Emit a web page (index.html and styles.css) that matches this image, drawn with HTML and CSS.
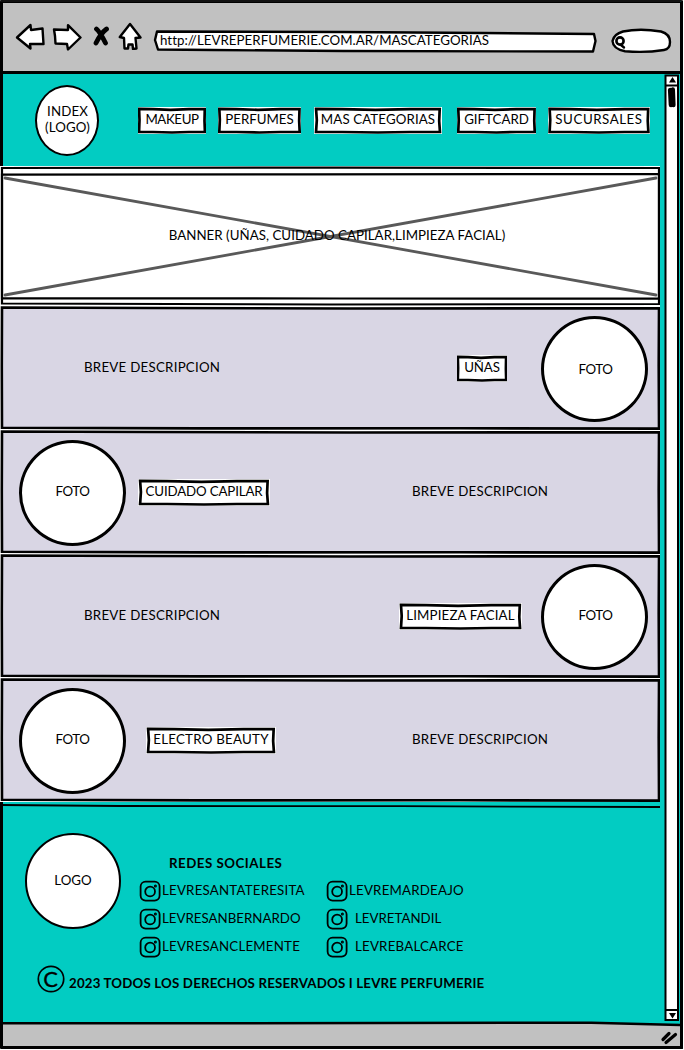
FILE: index.html
```
<!DOCTYPE html>
<html lang="es">
<head>
<meta charset="utf-8">
<title>Levre Perfumerie - Mas categorias</title>
<link rel="stylesheet" href="styles.css">
</head>
<body>
<svg class="defs" aria-hidden="true">
  <symbol id="chip" viewBox="0 0 100 27" preserveAspectRatio="none">
    <rect width="100" height="27" fill="#fff"/>
    <path d="M1.6 1.8 L22 2.2 48 2.8 75 2.2 98.2 2 97.8 14 98.4 25 75 25 50 25.5 22 25 1.6 24.8 2.2 13Z"/>
  </symbol>
  <symbol id="panel" viewBox="0 0 660 124" preserveAspectRatio="none">
    <rect width="660" height="124" fill="#fff"/>
    <path d="M2 1.5 L150 2 350 2.5 659 2.2 658.7 60 659 122.6 460 122.3 200 122.4 2 121.7 1.8 60Z"/>
  </symbol>
  <symbol id="instagram" viewBox="0 0 22 22">
    <rect x="1.6" y="1.6" width="19" height="19" rx="5"/>
    <circle cx="11.1" cy="11.5" r="4.9"/>
    <circle cx="16.4" cy="6" r=".6"/>
  </symbol>
</svg>
<div class="window">
  <header class="toolbar">
    <svg class="back" width="30" height="28" viewBox="0 0 30 28"><path d="M2 14.5 L15.5 2 16 7 27.5 5.5 28.5 21 15 21 15.5 25.5Z"/></svg>
    <svg class="forward" width="32" height="28" viewBox="0 0 32 28"><path d="M3 6.5 L17 7 17 2.2 29.5 14.5 17 26.5 16 21 4.5 20.5 4 13Z"/></svg>
    <svg class="stop" width="18" height="20" viewBox="0 0 18 20"><path d="M4.5 3 Q8 6 13.5 17 M14.5 3 Q9 7 4 17"/></svg>
    <svg class="home" width="24" height="28" viewBox="0 0 24 28"><path d="M12 2 L22.5 15.5 17.5 16 18.5 26.5 15 27 14.5 22.5 10.5 22.5 10 26.5 6.5 26.5 6 16 1.8 15Z"/></svg>
    <div class="address">
      <svg width="446" height="24" viewBox="0 0 446 24"><path d="M4 2.5 L190 3 330 4 441 5 442.5 12 440 22.5 190 22 60 21 5 20.5 2 11Z"/></svg>
      <span>http://LEVREPERFUMERIE.COM.AR/MASCATEGORIAS</span>
    </div>
    <svg class="search" width="62" height="28" viewBox="0 0 62 28"><path d="M13 4.5 Q30 1 51 4.5 Q60 7 60 15 Q60 22 54 23 Q35 26 15 24.2 Q3 22 2.5 14 Q4 7 13 4.5Z"/><circle cx="10" cy="14" r="3.6"/><path d="M11 18 L14 20.5"/></svg>
  </header>

  <div class="viewport">
    <main class="content">
      <nav class="nav">
        <a class="index">INDEX<br>(LOGO)</a>
        <div class="menu">
          <a class="chip makeup"><svg><use href="#chip"/></svg><span>MAKEUP</span></a>
          <a class="chip perfumes"><svg><use href="#chip"/></svg><span>PERFUMES</span></a>
          <a class="chip mas"><svg><use href="#chip"/></svg><span>MAS CATEGORIAS</span></a>
          <a class="chip gift"><svg><use href="#chip"/></svg><span>GIFTCARD</span></a>
          <a class="chip stores"><svg><use href="#chip"/></svg><span>SUCURSALES</span></a>
        </div>
      </nav>

      <section class="banner">
        <svg width="660" height="140" viewBox="0 0 660 140">
          <path class="outline" d="M2 2 L340 1.6 659 2 V138 L330 138.5 2 137.5Z"/>
          <path class="outline" d="M2 8.6 L300 8.3 659 8 V132.6 L340 132.5 2 132.3Z"/>
          <path class="cross" d="M5 12 L656 129 M5 129 L656 12"/>
        </svg>
        <span>BANNER (UÑAS, CUIDADO CAPILAR,LIMPIEZA FACIAL)</span>
      </section>

      <section class="row">
        <svg class="panel"><use href="#panel"/></svg>
        <div class="cells unas">
          <p>BREVE DESCRIPCION</p>
          <a class="chip"><svg><use href="#chip"/></svg><span>UÑAS</span></a>
          <div class="foto">FOTO</div>
        </div>
      </section>
      <section class="row">
        <svg class="panel"><use href="#panel"/></svg>
        <div class="cells capilar">
          <div class="foto">FOTO</div>
          <a class="chip"><svg><use href="#chip"/></svg><span>CUIDADO CAPILAR</span></a>
          <p>BREVE DESCRIPCION</p>
        </div>
      </section>
      <section class="row">
        <svg class="panel"><use href="#panel"/></svg>
        <div class="cells facial">
          <p>BREVE DESCRIPCION</p>
          <a class="chip"><svg><use href="#chip"/></svg><span>LIMPIEZA FACIAL</span></a>
          <div class="foto">FOTO</div>
        </div>
      </section>
      <section class="row">
        <svg class="panel"><use href="#panel"/></svg>
        <div class="cells electro">
          <div class="foto">FOTO</div>
          <a class="chip"><svg><use href="#chip"/></svg><span>ELECTRO BEAUTY</span></a>
          <p>BREVE DESCRIPCION</p>
        </div>
      </section>

      <footer class="footer">
        <svg class="rule" width="660" height="8" viewBox="0 0 660 8"><path d="M2 3 L120 4 400 4.2 660 5"/></svg>
        <div class="about">
          <div class="logo">LOGO</div>
          <div class="social">
            <h2>REDES SOCIALES</h2>
            <ul>
              <li><svg><use href="#instagram"/></svg><span>LEVRESANTATERESITA</span></li>
              <li><svg><use href="#instagram"/></svg><span>LEVREMARDEAJO</span></li>
              <li><svg><use href="#instagram"/></svg><span class="tight">LEVRESANBERNARDO</span></li>
              <li class="spaced"><svg><use href="#instagram"/></svg><span class="tight">LEVRETANDIL</span></li>
              <li><svg><use href="#instagram"/></svg><span>LEVRESANCLEMENTE</span></li>
              <li class="spaced"><svg><use href="#instagram"/></svg><span>LEVREBALCARCE</span></li>
            </ul>
          </div>
        </div>
        <div class="legal">
          <svg width="28" height="28" viewBox="0 0 28 28"><circle cx="14" cy="14" r="12.7"/><text x="13.5" y="21.8" text-anchor="middle">C</text></svg>
          <strong>2023 TODOS LOS DERECHOS RESERVADOS I LEVRE PERFUMERIE</strong>
        </div>
      </footer>
    </main>

    <aside class="scrollbar">
      <svg width="16" height="948" viewBox="0 0 16 948">
        <path class="track" d="M1.5 1.5 H14 V946 H1.5Z M1.5 11.5 H14 M1.5 936 H14"/>
        <path class="mark" d="M8.5 3 L12 8.5 H5Z M5 939 H12 L8.5 944.5Z"/>
        <path class="thumb" d="M6.2 16 L7 31 M8.7 15.5 L9.3 31"/>
      </svg>
    </aside>
  </div>

  <div class="status">
    <svg class="edge" width="679" height="6" viewBox="0 0 679 6"><path d="M590 0 H679 V4 L590 1.5Z" fill="#02ccc2"/><path class="line" d="M0 2.3 L150 2.3 590 1.7 679 4"/></svg>
    <svg class="grip" width="18" height="15" viewBox="0 0 18 15"><path d="M3 9.5 L9 3.5 M6 12.5 L15.5 4.5"/></svg>
  </div>
</div>
</body>
</html>
```
FILE: styles.css
```
* { box-sizing: border-box; }

body {
  margin: 0;
  background: #fff;
  color: #000;
  font: 13.3px/16px Lato, "Noto Sans", sans-serif;
  letter-spacing: .25px;
}

.defs { display: block; width: 0; height: 0; }
symbol path { fill: inherit; stroke: #000; vector-effect: non-scaling-stroke; }

.window {
  width: 683px;
  height: 1049px;
  display: flex;
  flex-direction: column;
  background: #02ccc2;
  border: solid #000;
  border-width: 2px 3px 3px 0;
  border-top-color: #111;
  border-radius: 1px;
}

/* Browser toolbar */
.toolbar {
  height: 72px;
  flex: none;
  display: flex;
  align-items: flex-start;
  padding: 21px 0 0 12px;
  background: #c1c1c1;
  border: solid #000;
  border-width: 1px 0 3px 3px;
}
.toolbar svg { flex: none; }
.toolbar path { fill: #fff; stroke: #000; stroke-width: 2.4; stroke-linejoin: round; stroke-linecap: round; }
.back { margin-top: -1px; }
.forward { margin: -1px 0 0 6px; }
.stop { margin: 2px 0 0 9px; }
.toolbar .stop path { fill: none; stroke-width: 4.8; }
.home { margin: -2px 0 0 8px; }
.address { display: grid; margin: 5px 0 0 11px; width: 446px; align-items: start; letter-spacing: .03px; }
.address > * { grid-area: 1 / 1; }
.address span { padding: 3px 0 0 7px; white-space: nowrap; }
.search { margin: 3px 0 0 11px; }
.search circle { fill: #fff; stroke: #000; stroke-width: 2.6; }

.viewport { display: flex; flex: none; height: 948px; border-left: 1px solid #000; }
.content { width: 659px; flex: none; }

/* Category menu */
.nav { height: 92px; display: flex; padding-left: 32px; border-left: 2px solid #000; }
.index {
  width: 64px;
  height: 71px;
  margin-top: 11px;
  border: 2px solid #000;
  border-radius: 50%;
  background: #fff;
  text-align: center;
  letter-spacing: .1px;
  padding: 16px 0 0 1px;
  flex: none;
}
.menu { display: flex; margin: 33px 0 0 39px; }
.chip { display: grid; height: 27px; flex: none; }
.chip > * { grid-area: 1 / 1; }
.chip svg { width: 100%; height: 27px; fill: #fff; stroke-width: 2.7px; }
.chip span { text-align: center; padding-top: 4px; white-space: nowrap; }
.makeup { width: 68px; letter-spacing: -.4px; }
.perfumes { width: 83px; margin-left: 12px; letter-spacing: 0; }
.mas { width: 128px; margin-left: 13px; letter-spacing: .1px; }
.gift { width: 79px; margin-left: 15px; letter-spacing: 0; }
.stores { width: 102px; margin-left: 12px; letter-spacing: .55px; }

/* Banner */
.banner { display: grid; width: 660px; height: 140px; margin-left: -1px; background: #fff; }
.banner > * { grid-area: 1 / 1; }
.banner span { align-self: center; text-align: center; padding: 0 0 2px 14px; letter-spacing: .03px; }
.outline { fill: none; stroke: #000; stroke-width: 2.2; }
.cross { fill: none; stroke: #595959; stroke-width: 2.8; stroke-linecap: round; }

/* Category rows */
.row { display: grid; width: 660px; height: 124px; margin-left: -1px; }
.row > * { grid-area: 1 / 1; }
.panel { width: 660px; height: 124px; fill: #d9d6e4; stroke-width: 2.6px; }
.cells { display: flex; align-items: flex-start; }
.cells p { margin: 53px 0 0; width: 136px; text-align: center; white-space: nowrap; }
.cells .chip { margin-top: 49px; }
.foto {
  width: 107px;
  height: 106px;
  margin-top: 10px;
  border: 3px solid #000;
  border-radius: 50%;
  background: #fff;
  text-align: center;
  line-height: 97px;
  letter-spacing: -.4px;
  flex: none;
}
.unas .foto { line-height: 101px; }
.unas .foto, .facial .foto { padding-left: 2px; }
.unas p, .facial p { margin-left: 84px; }
.unas .chip { width: 50px; margin-left: 237px; letter-spacing: -.1px; }
.unas .foto { margin-left: 34px; }
.capilar .foto, .electro .foto { margin-left: 19px; }
.capilar .chip { width: 132px; margin-left: 12px; letter-spacing: -.15px; }
.capilar p { margin-left: 142px; }
.facial .chip { width: 123px; margin-left: 179px; letter-spacing: .15px; }
.facial .foto { margin-left: 19px; }
.electro .chip { width: 130px; margin-left: 20px; }
.electro p { margin-left: 136px; }

/* Footer */
.footer { height: 220px; margin-left: -1px; border-left: 3px solid #000; }
.rule { display: block; margin-left: -3px; }
.rule path { fill: none; stroke: #000; stroke-width: 1.8; }
.about { display: flex; padding-left: 22px; }
.logo {
  width: 96px;
  height: 96px;
  margin-top: 23px;
  border: 2px solid #000;
  border-radius: 50%;
  background: #fff;
  text-align: center;
  letter-spacing: 0;
  line-height: 91px;
  flex: none;
}
.social { margin: 45px 0 0 18px; }
.social h2 { margin: 0 0 0 30px; font-size: 13.3px; line-height: 16px; letter-spacing: .5px; }
.social ul {
  list-style: none;
  margin: 9px 0 0;
  padding: 0;
  display: grid;
  grid-template-columns: 187px 160px;
  grid-auto-rows: 28px;
}
.social li { display: flex; white-space: nowrap; }
.social li svg { width: 22px; height: 22px; fill: none; stroke: #000; stroke-width: 1.8; }
.social li span { margin-top: 2px; padding-left: 1px; letter-spacing: .2px; }
.social li .tight { letter-spacing: 0; }
.social .spaced span { padding-left: 7px; }
.legal { display: flex; margin: 1px 0 0 34px; }
.legal svg circle { fill: none; stroke: #000; stroke-width: 1.7; }
.legal svg text { font: 22px Lato, sans-serif; letter-spacing: 0; stroke: #000; stroke-width: .3; }
.legal strong { margin: 10px 0 0 4px; white-space: nowrap; letter-spacing: .17px; }

/* Scrollbar */
.scrollbar { margin-left: 4px; }
.track { fill: #fff; stroke: #000; stroke-width: 2; }
.thumb { fill: none; stroke: #000; stroke-width: 4.6; stroke-linecap: round; }

/* Status bar */
.status { flex: 1; display: flex; flex-wrap: wrap; background: #c1c1c1; border-left: 3px solid #000; align-content: flex-start; }
.edge { width: 677px; margin-top: -1px; flex: none; }
.line { fill: none; stroke: #000; stroke-width: 2.5; }
.grip { margin: 3px 2px 0 auto; }
.grip path { fill: none; stroke: #000; stroke-width: 3.2; stroke-linecap: round; }
```
